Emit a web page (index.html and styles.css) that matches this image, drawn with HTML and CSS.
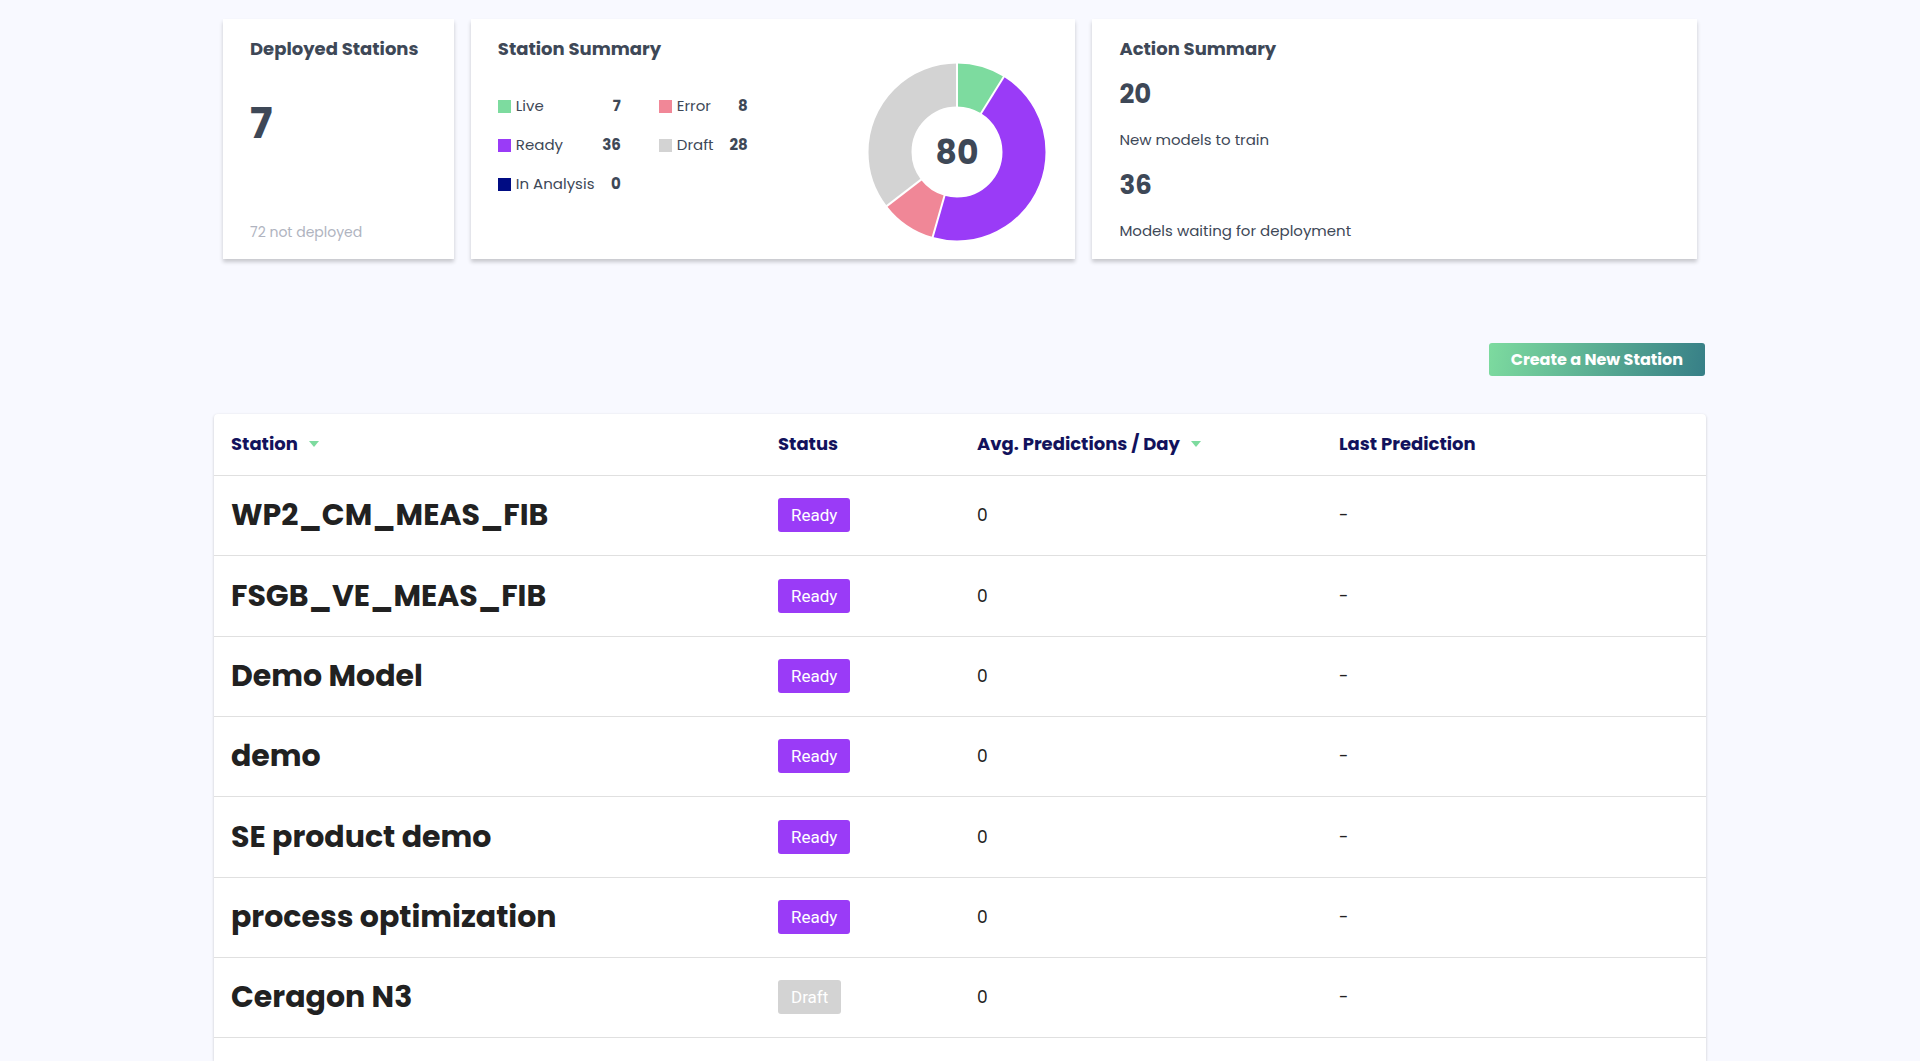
FILE: index.html
```html
<!DOCTYPE html>
<html lang="en">
<head>
<meta charset="utf-8">
<meta name="viewport" content="width=device-width, initial-scale=1">
<title>Stations</title>
<link rel="stylesheet" href="styles.css">
</head>
<body>
<main class="page">
  <section class="cards">
    <article class="card">
      <h2 class="card-title">Deployed Stations</h2>
      <p class="deployed-count">7</p>
      <p class="muted">72 not deployed</p>
    </article>
    <article class="card summary">
      <div>
        <h2 class="card-title">Station Summary</h2>
        <ul class="legend">
          <li><i class="swatch live"></i><span>Live</span><b>7</b></li>
          <li><i class="swatch error"></i><span>Error</span><b>8</b></li>
          <li><i class="swatch ready"></i><span>Ready</span><b>36</b></li>
          <li><i class="swatch draft"></i><span>Draft</span><b>28</b></li>
          <li><i class="swatch analysis"></i><span>In Analysis</span><b>0</b></li>
        </ul>
      </div>
      <svg class="donut" viewBox="-90 -90 180 180" role="img" aria-label="80 stations by status">
        <g class="ring" transform="rotate(-90)">
          <circle class="arc-live" r="67" pathLength="79" stroke-dasharray="7 72"/>
          <circle class="arc-ready" r="67" pathLength="79" stroke-dasharray="36 43" stroke-dashoffset="-7"/>
          <circle class="arc-error" r="67" pathLength="79" stroke-dasharray="8 71" stroke-dashoffset="-43"/>
          <circle class="arc-draft" r="67" pathLength="79" stroke-dasharray="28 51" stroke-dashoffset="-51"/>
        </g>
        <g class="gaps">
          <path d="M0-40V-90"/>
          <path d="M0-40V-90" transform="rotate(31.9)"/>
          <path d="M0-40V-90" transform="rotate(195.95)"/>
          <path d="M0-40V-90" transform="rotate(232.4)"/>
        </g>
        <text class="donut-total" y="12" text-anchor="middle">80</text>
      </svg>
    </article>
    <article class="card">
      <h2 class="card-title">Action Summary</h2>
      <p class="action-count">20</p>
      <p class="action-label">New models to train</p>
      <p class="action-count">36</p>
      <p class="action-label">Models waiting for deployment</p>
    </article>
  </section>

  <div class="toolbar">
    <button class="create" type="button">Create a New Station</button>
  </div>

  <section class="table-card">
    <table class="stations">
      <colgroup>
        <col>
        <col class="col-status">
        <col class="col-average">
        <col class="col-last">
      </colgroup>
      <thead>
        <tr>
          <th scope="col"><button class="sort" type="button">Station<svg class="caret" viewBox="0 0 10 6" aria-hidden="true"><path d="M0 0H10L5 6Z"/></svg></button></th>
          <th scope="col">Status</th>
          <th scope="col"><button class="sort" type="button">Avg. Predictions / Day<svg class="caret" viewBox="0 0 10 6" aria-hidden="true"><path d="M0 0H10L5 6Z"/></svg></button></th>
          <th scope="col">Last Prediction</th>
        </tr>
      </thead>
      <tbody>
        <tr><td class="name">WP2_CM_MEAS_FIB</td><td><span class="badge ready">Ready</span></td><td>0</td><td>-</td></tr>
        <tr><td class="name">FSGB_VE_MEAS_FIB</td><td><span class="badge ready">Ready</span></td><td>0</td><td>-</td></tr>
        <tr><td class="name">Demo Model</td><td><span class="badge ready">Ready</span></td><td>0</td><td>-</td></tr>
        <tr><td class="name">demo</td><td><span class="badge ready">Ready</span></td><td>0</td><td>-</td></tr>
        <tr><td class="name">SE product demo</td><td><span class="badge ready">Ready</span></td><td>0</td><td>-</td></tr>
        <tr><td class="name">process optimization</td><td><span class="badge ready">Ready</span></td><td>0</td><td>-</td></tr>
        <tr><td class="name">Ceragon N3</td><td><span class="badge draft">Draft</span></td><td>0</td><td>-</td></tr>
      </tbody>
    </table>
  </section>
</main>
</body>
</html>
```
FILE: styles.css
```css
* {
  box-sizing: border-box;
}

body {
  margin: 0;
  background: #f8f9ff;
  color: #3e4857;
  font-family: Poppins, Inter, sans-serif;
}

h2,
p,
ul {
  margin: 0;
  padding: 0;
}

.page {
  display: flex;
  flex-direction: column;
  min-height: 100vh;
  width: 92%;
  max-width: 1492px;
  margin: 0 auto;
  padding-top: 19px;
}

.cards {
  display: grid;
  grid-template-columns: 231fr 605fr 605fr;
  gap: 17px;
  padding: 0 9px;
}

.card {
  display: flex;
  flex-direction: column;
  min-height: 240px;
  padding: 16px 27px 14px;
  background: #fff;
  box-shadow: 0 3px 4px rgba(0, 0, 0, 0.2);
}

.card-title {
  font-size: 18px;
  line-height: 28px;
  font-weight: 700;
  white-space: nowrap;
}

.deployed-count {
  margin-top: 31px;
  font-size: 42px;
  line-height: 60px;
  font-weight: 700;
}

.muted {
  margin-top: auto;
  color: #b0b4bf;
  font-size: 14px;
  line-height: 26px;
}

.summary {
  flex-direction: row;
  justify-content: space-between;
}

.legend {
  display: grid;
  grid-template-columns: 123px 89px;
  column-gap: 38px;
  row-gap: 15px;
  margin-top: 31px;
  list-style: none;
  font-size: 15px;
  line-height: 24px;
}

.legend li {
  display: flex;
  align-items: center;
  gap: 5px;
}

.legend b {
  margin-left: auto;
}

.swatch {
  width: 13px;
  height: 13px;
}

.live { background: #7ddb9f; }
.error { background: #f18797; }
.ready { background: #9a3bf7; }
.draft { background: #d3d3d3; }
.analysis { background: #000c83; }

.donut {
  flex: none;
  align-self: flex-end;
  width: 180px;
  height: 180px;
  margin: 0 1px 3px 0;
}

.ring {
  fill: none;
  stroke-width: 43px;
}

.arc-live { stroke: #7ddb9f; }
.arc-ready { stroke: #9a3bf7; }
.arc-error { stroke: #f08797; }
.arc-draft { stroke: #d3d3d3; }

.gaps {
  stroke: #fff;
  stroke-width: 2px;
}

.donut-total {
  fill: #3e4857;
  font-size: 33px;
  font-weight: 700;
}

.action-count {
  margin-top: 11px;
  font-size: 26px;
  line-height: 40px;
  font-weight: 700;
}

.action-label {
  margin-top: 13px;
  font-size: 15px;
  line-height: 26px;
}

.action-label + .action-count {
  margin-top: 12px;
}

.toolbar {
  display: flex;
  justify-content: flex-end;
  margin: 84px 1px 38px;
}

.create {
  padding: 0 22px;
  border: 0;
  border-radius: 3px;
  background: linear-gradient(100deg, #7ddb9f, #377f87);
  color: #fff;
  font: 700 16px/33px Poppins, Inter, sans-serif;
}

.table-card {
  flex: 1;
  border-radius: 4px 4px 0 0;
  background: #fff;
  box-shadow: 0 1px 3px rgba(0, 0, 0, 0.2);
}

.stations {
  width: 100%;
  border-collapse: separate;
  border-spacing: 0;
  table-layout: fixed;
}

.col-status { width: 199px; }
.col-average { width: 362px; }
.col-last { width: 384px; }

.stations th,
.stations td {
  padding: 0 17px;
  border-bottom: 1px solid #e0e0e0;
  text-align: left;
  vertical-align: middle;
}

.stations th {
  height: 62px;
  padding-bottom: 2px;
  color: #12125c;
  font-size: 18px;
  font-weight: 700;
  white-space: nowrap;
}

.stations td {
  height: 80px;
  padding-bottom: 1px;
  color: #212121;
  font-size: 17px;
}

.stations tr:nth-child(3n + 2) td {
  height: 81px;
}

.stations .name {
  font-size: 30px;
  font-weight: 700;
}

.sort {
  display: flex;
  align-items: center;
  gap: 11px;
  padding: 0;
  border: 0;
  background: none;
  color: inherit;
  font: inherit;
}

.caret {
  width: 10px;
  height: 6px;
  fill: #7ddb9f;
}

.badge {
  display: inline-block;
  padding: 0 13px;
  border-radius: 3px;
  color: #fff;
  font: 17px/34px Roboto, sans-serif;
  vertical-align: middle;
}
```
